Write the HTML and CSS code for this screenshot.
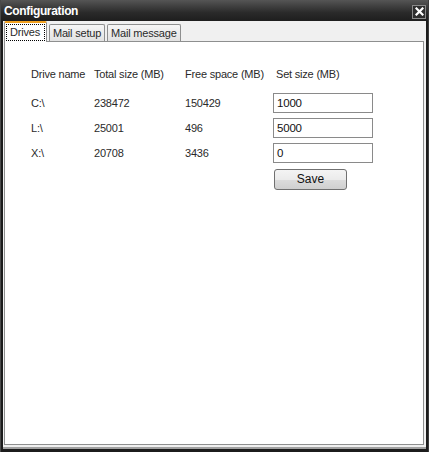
FILE: index.html
```html
<!DOCTYPE html>
<html>
<head>
<meta charset="utf-8">
<link rel="stylesheet" href="styles.css">
</head>
<body>
<div class="window">
  <div class="titlebar">
    <span class="title">Configuration</span>
    <span class="close">
      <svg width="9" height="9" viewBox="0 0 9 9"><path d="M1.5 1.5 L7.5 7.5 M7.5 1.5 L1.5 7.5" stroke="#fff" stroke-width="2.2" stroke-linecap="square"/></svg>
    </span>
  </div>
  <div class="client">
    <div class="tabs">
      <div class="tab active"><span class="focus">Drives</span></div>
      <div class="tab">Mail setup</div>
      <div class="tab">Mail message</div>
    </div>
    <div class="panel">
      <div class="grid">
        <div class="hdr">Drive name</div>
        <div class="hdr">Total size (MB)</div>
        <div class="hdr">Free space (MB)</div>
        <div class="hdr hdr-set">Set size (MB)</div>

        <div class="cell">C:\</div>
        <div class="cell">238472</div>
        <div class="cell">150429</div>
        <div class="inp">1000</div>

        <div class="cell">L:\</div>
        <div class="cell">25001</div>
        <div class="cell">496</div>
        <div class="inp">5000</div>

        <div class="cell">X:\</div>
        <div class="cell">20708</div>
        <div class="cell">3436</div>
        <div class="inp">0</div>

        <div class="btn-cell"><button class="btn">Save</button></div>
      </div>
    </div>
  </div>
</div>
</body>
</html>
```

FILE: styles.css
```css
html, body {
  margin: 0;
  padding: 0;
  background: #1e1e1e;
}
.window {
  width: 429px;
  height: 452px;
  box-sizing: border-box;
  background: #1c1c1c;
  border-left: 1px solid #4a4a4a;
  border-right: 1px solid #3a3a3a;
  display: flex;
  flex-direction: column;
  font-family: "Liberation Sans", Arial, sans-serif;
  font-size: 11px;
  letter-spacing: -0.2px;
  color: #2a2a2a;
}
.titlebar {
  height: 21px;
  flex: none;
  background: linear-gradient(#555555, #2a2a2a 60%, #1e1e1e);
  display: flex;
  align-items: center;
  justify-content: space-between;
  padding: 0 2px 0 3px;
}
.title {
  color: #fff;
  font-weight: bold;
  font-size: 12px;
  letter-spacing: -0.35px;
  padding-top: 1px;
}
.close {
  width: 12px;
  height: 12px;
  border: 1px solid #8a8a8a;
  background: #2e2e2e;
  display: flex;
  align-items: center;
  justify-content: center;
  margin-top: 2px;
}
.client {
  flex: 1;
  margin: 0 2px 3px 2px;
  background: #f0f0f0;
  border-bottom: 2px solid #a0a0a0;
  display: flex;
  flex-direction: column;
  padding: 0 1px 2px 1px;
}
.tabs {
  height: 20px;
  display: flex;
  align-items: flex-end;
  gap: 2px;
  flex: none;
  position: relative;
  z-index: 1;
}
.tab {
  height: 17px;
  box-sizing: border-box;
  padding: 0 3px;
  border: 1px solid #8e8f8f;
  border-bottom: none;
  border-radius: 2px 2px 0 0;
  background: linear-gradient(#f6f6f6, #e2e2e2);
  display: flex;
  align-items: center;
  font-size: 11px;
}
.tab.active {
  height: 21px;
  margin-bottom: -1px;
  background: #fff;
  border-top: 2px solid #f0a020;
  padding: 0 1px;
}
.focus {
  border: 1px dotted #000;
  padding: 1px 4px 1px 3px;
  line-height: 13px;
}
.panel {
  flex: 1;
  background: #fff;
  border: 1px solid #8e8f8f;
  margin-right: 1px;
}
.grid {
  display: grid;
  grid-template-columns: 63px 91px 88px 100px;
  grid-template-rows: 21px 20px 20px 20px 21px;
  row-gap: 5px;
  padding: 25px 0 0 26px;
  align-items: center;
}
.hdr {
  align-self: start;
  line-height: 15px;
}
.hdr-set {
  padding-left: 3px;
}
.inp {
  height: 20px;
  box-sizing: border-box;
  border: 1px solid #8a8a8a;
  padding: 0 3px;
  display: flex;
  align-items: center;
  font-size: 11.5px;
  color: #111;
  background: #fff;
}
.btn-cell {
  grid-column: 4;
  padding-top: 1px;
}
.btn {
  width: 73px;
  height: 21px;
  border: 1px solid #707070;
  border-radius: 3px;
  background: linear-gradient(#f4f4f4 0%, #ebebeb 50%, #dcdcdc 51%, #cfcfcf 100%);
  font-family: "Liberation Sans", Arial, sans-serif;
  font-size: 12px;
  padding: 0;
  margin-left: 1px;
  color: #111;
}
```
